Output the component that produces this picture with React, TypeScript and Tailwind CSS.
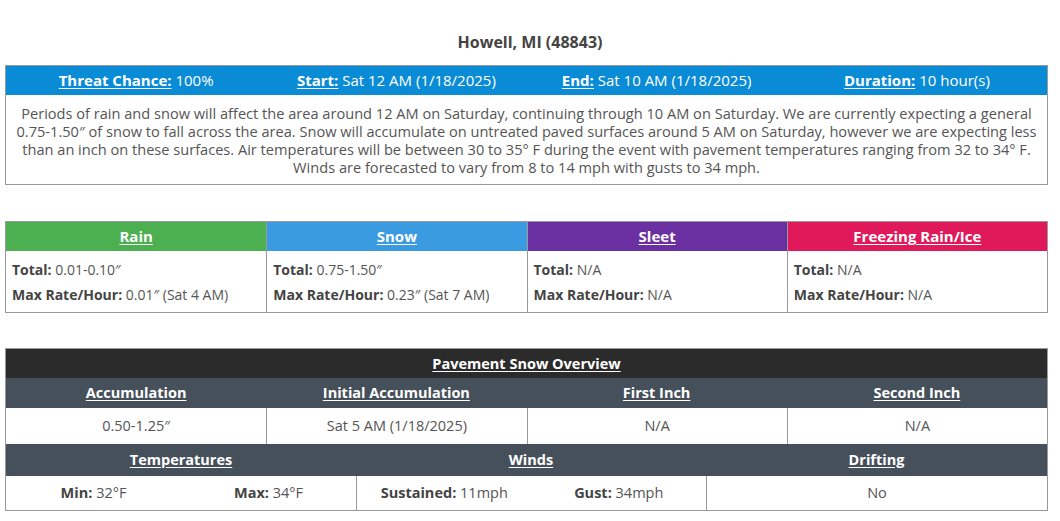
import React from "react";

const font = { fontFamily: '"Open Sans", "Lato", sans-serif' };

const precip = [
  { name: "Rain", bg: "bg-[#4caf50]", total: "0.01-0.10″", rate: "0.01″ (Sat 4 AM)" },
  { name: "Snow", bg: "bg-[#3b9be0]", total: "0.75-1.50″", rate: "0.23″ (Sat 7 AM)" },
  { name: "Sleet", bg: "bg-[#6a2fa0]", total: "N/A", rate: "N/A" },
  { name: "Freezing Rain/Ice", bg: "bg-[#e0195b]", total: "N/A", rate: "N/A" },
];

function Summary() {
  const items = [
    ["Threat Chance:", "100%"],
    ["Start:", "Sat 12 AM (1/18/2025)"],
    ["End:", "Sat 10 AM (1/18/2025)"],
    ["Duration:", "10 hour(s)"],
  ];
  return (
    <div className="mx-[5px] w-[1043px] border border-[#9a9a9a]">
      <div className="grid grid-cols-4 h-[29px] items-center bg-[#0a8bd6] text-white text-[15px]">
        {items.map(([k, v]) => (
          <div key={k} className="text-center">
            <span className="font-bold underline underline-offset-2">{k}</span> {v}
          </div>
        ))}
      </div>
      <div className="px-1 pt-[9px] pb-[8px] text-center text-[14.6px] leading-[18px] text-[#555] whitespace-nowrap">
        Periods of rain and snow will affect the area around 12 AM on Saturday, continuing through 10 AM on Saturday. We are currently expecting a general
        <br />
        0.75-1.50″ of snow to fall across the area. Snow will accumulate on untreated paved surfaces around 5 AM on Saturday, however we are expecting less
        <br />
        than an inch on these surfaces. Air temperatures will be between 30 to 35° F during the event with pavement temperatures ranging from 32 to 34° F.
        <br />
        Winds are forecasted to vary from 8 to 14 mph with gusts to 34 mph.
      </div>
    </div>
  );
}

function Precip() {
  return (
    <div className="mx-[5px] w-[1043px] mt-[36px] border border-[#9a9a9a] grid grid-cols-4">
      {precip.map((p, i) => (
        <div key={p.name} className={i > 0 ? "border-l border-[#9a9a9a]" : ""}>
          <div className={`${p.bg} h-[29px] flex items-center justify-center text-white font-bold text-[15px]`}>
            <span className="underline underline-offset-2">{p.name}</span>
          </div>
          <div className="px-[6px] pt-[6px] pb-[5px] text-[14px] leading-[25px] text-[#555]">
            <div>
              <span className="font-bold text-[#444]">Total:</span> {p.total}
            </div>
            <div>
              <span className="font-bold text-[#444]">Max Rate/Hour:</span> {p.rate}
            </div>
          </div>
        </div>
      ))}
    </div>
  );
}

function Pair({ k, v }: { k: string; v: string }) {
  return (
    <div className="flex-1 text-center">
      <span className="font-bold text-[#444]">{k}</span> {v}
    </div>
  );
}

function Pavement() {
  const heads = ["Accumulation", "Initial Accumulation", "First Inch", "Second Inch"];
  const vals = ["0.50-1.25″", "Sat 5 AM (1/18/2025)", "N/A", "N/A"];
  return (
    <div className="mx-[5px] w-[1043px] mt-[35px] border border-[#9a9a9a] text-[14.5px]">
      <div className="h-[29px] bg-[#2b2b2b] flex items-center justify-center text-white font-bold">
        <span className="underline underline-offset-2">Pavement Snow Overview</span>
      </div>
      <div className="grid grid-cols-4 h-[30px] items-center bg-[#46505b] text-white font-bold">
        {heads.map((h) => (
          <div key={h} className="text-center">
            <span className="underline underline-offset-2">{h}</span>
          </div>
        ))}
      </div>
      <div className="grid grid-cols-4 h-[36px] text-[#555]">
        {vals.map((v, i) => (
          <div key={i} className={`flex items-center justify-center ${i > 0 ? "border-l border-[#9a9a9a]" : ""}`}>
            {v}
          </div>
        ))}
      </div>
      <div className="grid grid-cols-[350px_350px_1fr] h-[32px] items-center bg-[#46505b] text-white font-bold">
        {["Temperatures", "Winds", "Drifting"].map((h) => (
          <div key={h} className="text-center">
            <span className="underline underline-offset-2">{h}</span>
          </div>
        ))}
      </div>
      <div className="grid grid-cols-[350px_350px_1fr] h-[34px] text-[#555]">
        <div className="flex items-center">
          <Pair k="Min:" v="32°F" />
          <Pair k="Max:" v="34°F" />
        </div>
        <div className="flex items-center border-l border-[#9a9a9a]">
          <Pair k="Sustained:" v="11mph" />
          <Pair k="Gust:" v="34mph" />
        </div>
        <div className="flex items-center justify-center border-l border-[#9a9a9a]">No</div>
      </div>
    </div>
  );
}

export default function App() {
  return (
    <div className="w-[1060px] h-[521px] bg-white overflow-hidden" style={font}>
      <div className="pt-[30px] h-[65px] text-center font-bold text-[16px] text-[#444]">Howell, MI (48843)</div>
      <Summary />
      <Precip />
      <Pavement />
    </div>
  );
}
